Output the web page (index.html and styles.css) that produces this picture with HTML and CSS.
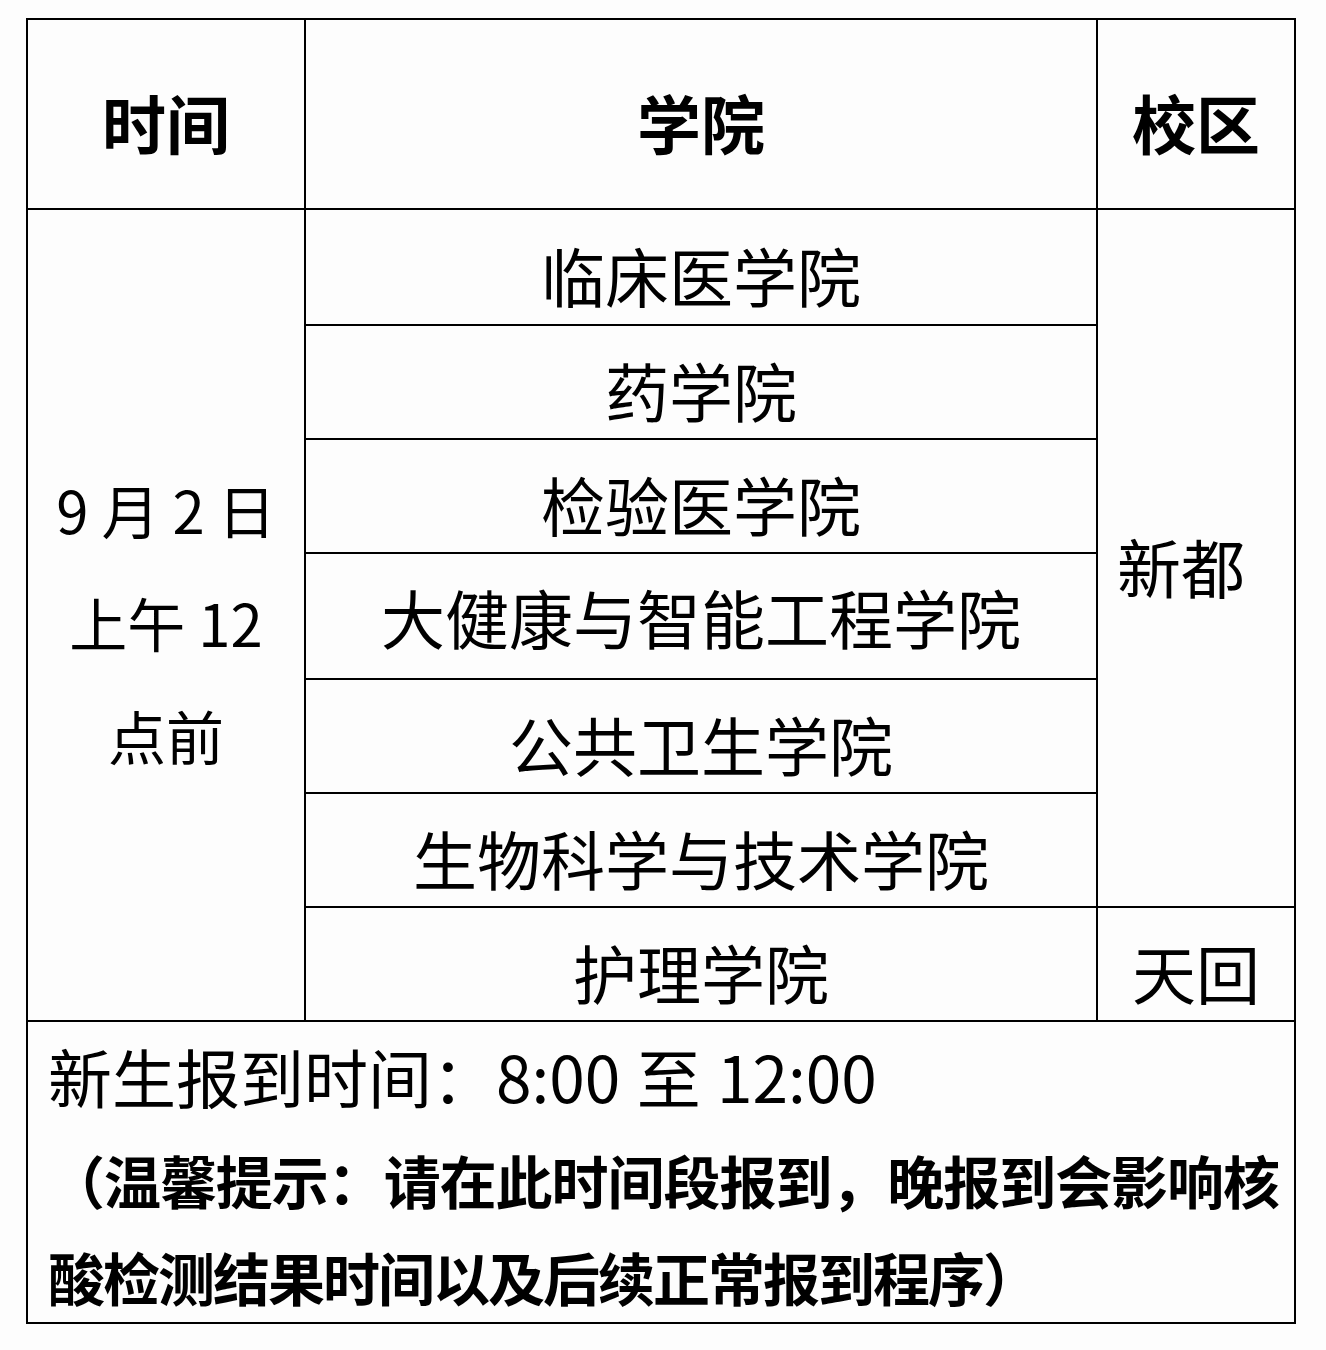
FILE: index.html
```html
<!DOCTYPE html>
<html lang="zh-CN">
<head>
<meta charset="utf-8">
<title>新生报到安排</title>
<link rel="stylesheet" href="styles.css">
</head>
<body>
<div class="page">
  <table class="schedule">
    <colgroup>
      <col class="c-time">
      <col class="c-college">
      <col class="c-campus">
    </colgroup>
    <thead>
      <tr class="r-head">
        <th>时间</th>
        <th>学院</th>
        <th>校区</th>
      </tr>
    </thead>
    <tbody>
      <tr class="r-first">
        <td rowspan="7" class="time">9 月 2 日<br>上午 12<br>点前</td>
        <td>临床医学院</td>
        <td rowspan="6" class="campus-xd">新都</td>
      </tr>
      <tr class="r-row"><td>药学院</td></tr>
      <tr class="r-row"><td>检验医学院</td></tr>
      <tr class="r-tall"><td class="tall">大健康与智能工程学院</td></tr>
      <tr class="r-row"><td>公共卫生学院</td></tr>
      <tr class="r-row"><td>生物科学与技术学院</td></tr>
      <tr class="r-row"><td>护理学院</td><td>天回</td></tr>
      <tr class="r-foot">
        <td colspan="3" class="note">
          <div class="note-time">新生报到时间：8:00 至 12:00</div>
          <p class="note-tip">（温馨提示：请在此时间段报到，晚报到会影响核酸检测结果时间以及后续正常报到程序）</p>
        </td>
      </tr>
    </tbody>
  </table>
</div>
</body>
</html>
```

FILE: styles.css
```css
html, body {
  margin: 0;
  padding: 0;
  background: #fdfdfd;
}

body {
  font-family: "Noto Sans CJK SC", "Noto Sans", sans-serif;
  color: #000;
}

.page {
  padding: 18px 0 0 26px;
}

.schedule {
  border-collapse: collapse;
  table-layout: fixed;
  width: 1270px;
  border: 2px solid #000;
}

.c-time { width: 278px; }
.c-college { width: 792px; }
.c-campus { width: 198px; }

.schedule th,
.schedule td {
  border: 2px solid #000;
  text-align: center;
  vertical-align: middle;
  padding: 14px 0 0 0;
  font-size: 64px;
  line-height: 80px;
  font-weight: 400;
}

.schedule th {
  font-weight: 700;
}

.r-head { height: 190px; }
.r-first { height: 116px; }
.r-row { height: 114px; }
.r-tall { height: 126px; }

.schedule td.tall {
  padding-top: 0;
}

.schedule td.time {
  font-size: 58px;
  line-height: 113px;
}

.time-digits {
  letter-spacing: 1px;
}

.schedule td.campus-xd {
  padding-right: 30px;
}

.schedule td.note {
  text-align: left;
  vertical-align: top;
  padding: 0 16px 0 20px;
}

.note-time {
  font-size: 64px;
  line-height: 106px;
  word-spacing: 2px;
}

.note-tip {
  margin: 3px 0 -3px 0;
  font-size: 57px;
  line-height: 97px;
  font-weight: 700;
  letter-spacing: -2px;
  text-align: justify;
}
```
